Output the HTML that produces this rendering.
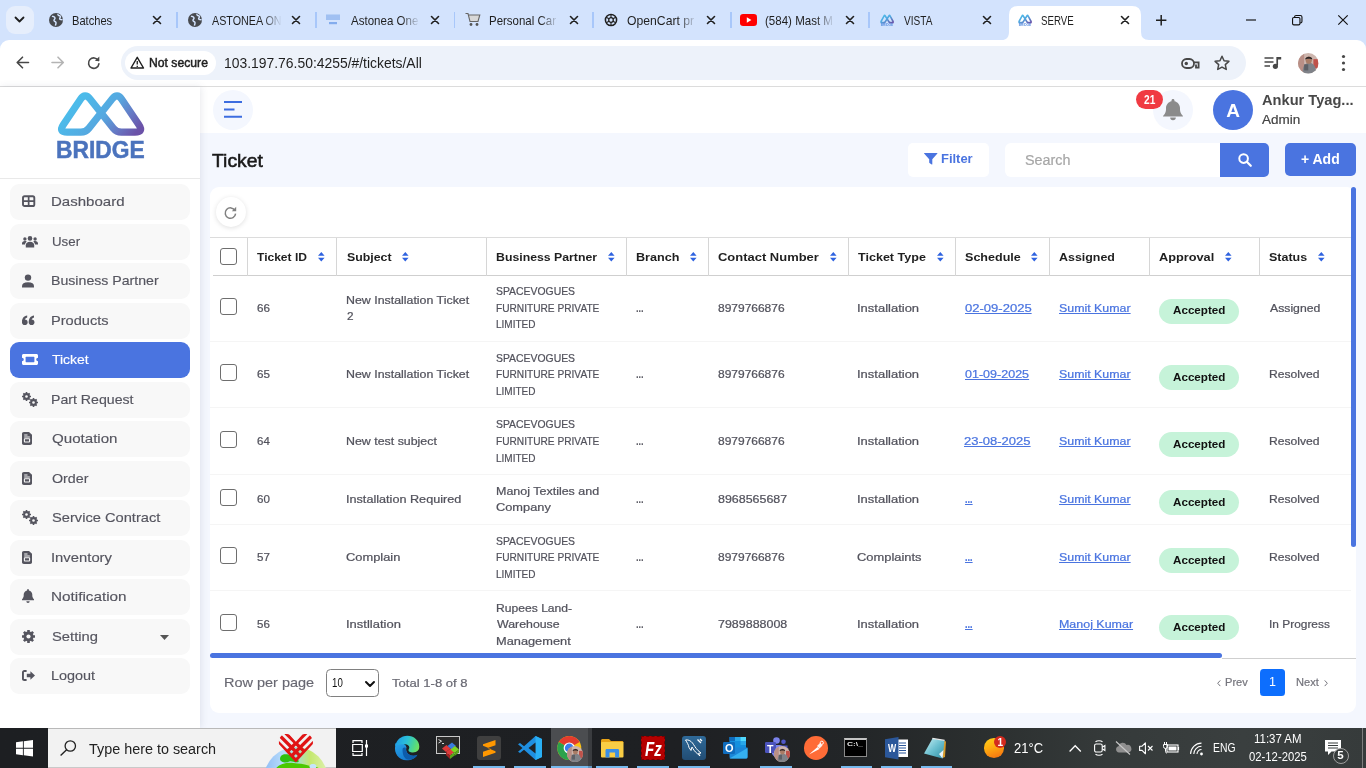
<!DOCTYPE html>
<html lang="en"><head><meta charset="utf-8"><title>SERVE</title>
<style>
*{margin:0;padding:0;box-sizing:border-box}
html,body{width:1366px;height:768px;overflow:hidden;background:#fff}
body{position:relative;font-family:"Liberation Sans",sans-serif;font-size:13px;color:#555}
.root{position:absolute;left:0;top:0;width:1366px;height:768px;will-change:transform}
.root>div,.root>svg,.root>span{position:absolute}
.t{position:absolute;white-space:nowrap;line-height:1;transform-origin:0 50%;display:block}
svg{display:block;overflow:visible}

</style></head>
<body>
<div class="root">
<div style="left:0px;top:0px;width:1366px;height:52px;background:#d3e3fd;"></div>
<div style="left:0px;top:40px;width:1366px;height:46px;background:#fff;border-radius:9px 9px 0 0"></div>
<div style="left:0px;top:86px;width:1366px;height:1px;background:#dcdcdc;"></div>
<div style="left:6px;top:6px;width:27.5px;height:28px;background:#e6eefc;border-radius:9px"></div>
<svg style="left:14px;top:16px;" width="11" height="8" viewBox="0 0 11 8"><path d="M1.5 1.5 L5.5 5.5 L9.5 1.5" fill="none" stroke="#1f1f1f" stroke-width="1.8" stroke-linecap="round" stroke-linejoin="round"/></svg>
<svg style="left:0;top:0" width="0" height="0"><defs><linearGradient id="lg" x1="0" y1="0" x2="1" y2="1"><stop offset="0" stop-color="#4bbbe9"/><stop offset=".45" stop-color="#52a9e0"/><stop offset="1" stop-color="#6a50a6"/></linearGradient></defs></svg>
<svg style="left:48.5px;top:13px;" width="14" height="14" viewBox="0 0 14 14"><circle cx="7" cy="7" r="7" fill="#474a4f"/><path d="M3 3.2c1.2.6 2.6.3 3 1.6.4 1.2-1.3 1.5-1 2.8.3 1 1.8.8 2 2 .2 1-.6 1.8-.4 3M9 1c-.3 1 .6 1.6 1.6 1.8 1 .2 1 1.4.4 2-.7.7-.3 1.6.8 1.8l1.8.2" fill="none" stroke="#d3e3fd" stroke-width="1.5"/></svg>
<span class="t" style="left:72.21px;top:14.86px;font-size:12.8px;color:#1f1f1f;transform:scaleX(0.8687);">Batches</span>
<svg style="left:152.5px;top:16px;" width="8" height="8" viewBox="0 0 8 8"><path d="M0.5 0.5 L7.5 7.5 M7.5 0.5 L0.5 7.5" stroke="#1f1f1f" stroke-width="1.6" stroke-linecap="round"/></svg>
<div style="left:176px;top:12px;width:1.5px;height:16px;background:#a8c7fa;"></div>
<svg style="left:188px;top:13px;" width="14" height="14" viewBox="0 0 14 14"><circle cx="7" cy="7" r="7" fill="#474a4f"/><path d="M3 3.2c1.2.6 2.6.3 3 1.6.4 1.2-1.3 1.5-1 2.8.3 1 1.8.8 2 2 .2 1-.6 1.8-.4 3M9 1c-.3 1 .6 1.6 1.6 1.8 1 .2 1 1.4.4 2-.7.7-.3 1.6.8 1.8l1.8.2" fill="none" stroke="#d3e3fd" stroke-width="1.5"/></svg>
<span class="t" style="left:211.60px;top:14.86px;font-size:12.8px;color:#1f1f1f;transform:scaleX(0.8391);">ASTONEA ON</span>
<svg style="left:292px;top:16px;" width="8" height="8" viewBox="0 0 8 8"><path d="M0.5 0.5 L7.5 7.5 M7.5 0.5 L0.5 7.5" stroke="#1f1f1f" stroke-width="1.6" stroke-linecap="round"/></svg>
<div style="left:315px;top:12px;width:1.5px;height:16px;background:#a8c7fa;"></div>
<svg style="left:325px;top:13px;" width="16" height="14" viewBox="0 0 16 14"><rect x="1" y="1.500" width="14" height="5.500" fill="#8fb4ee" opacity=".75"/><rect x="4" y="9" width="8" height="2.200" fill="#6f9ee8" opacity=".8"/></svg>
<span class="t" style="left:350.60px;top:14.86px;font-size:12.8px;color:#1f1f1f;transform:scaleX(0.9017);">Astonea One</span>
<svg style="left:431px;top:16px;" width="8" height="8" viewBox="0 0 8 8"><path d="M0.5 0.5 L7.5 7.5 M7.5 0.5 L0.5 7.5" stroke="#1f1f1f" stroke-width="1.6" stroke-linecap="round"/></svg>
<div style="left:453.5px;top:12px;width:1.5px;height:16px;background:#a8c7fa;"></div>
<svg style="left:465px;top:12px;" width="16" height="15" viewBox="0 0 16 15"><path d="M0.5 1.5h2.5l2 8h8l1.8-6.5h-11" fill="#d8d8d8" stroke="#666" stroke-width="1.1"/><circle cx="6" cy="12.5" r="1.4" fill="#555"/><circle cx="12" cy="12.5" r="1.4" fill="#555"/></svg>
<span class="t" style="left:488.68px;top:14.86px;font-size:12.8px;color:#1f1f1f;transform:scaleX(0.8965);">Personal Car</span>
<svg style="left:569.5px;top:16px;" width="8" height="8" viewBox="0 0 8 8"><path d="M0.5 0.5 L7.5 7.5 M7.5 0.5 L0.5 7.5" stroke="#1f1f1f" stroke-width="1.6" stroke-linecap="round"/></svg>
<div style="left:592px;top:12px;width:1.5px;height:16px;background:#a8c7fa;"></div>
<svg style="left:603.5px;top:13px;" width="14" height="14" viewBox="0 0 14 14"><circle cx="7" cy="7" r="5.6" fill="none" stroke="#1f1f1f" stroke-width="1.5"/><circle cx="7" cy="7" r="2.3" fill="none" stroke="#1f1f1f" stroke-width="1.3"/><path d="M7 1.4v3.3M7 9.3v3.3M2.2 4.2l2.8 1.6M9 8.2l2.8 1.6M2.2 9.8l2.8-1.6M9 5.8l2.8-1.6" stroke="#1f1f1f" stroke-width="1.1"/></svg>
<span class="t" style="left:627.05px;top:14.86px;font-size:12.8px;color:#1f1f1f;transform:scaleX(0.9528);">OpenCart pr</span>
<svg style="left:707px;top:16px;" width="8" height="8" viewBox="0 0 8 8"><path d="M0.5 0.5 L7.5 7.5 M7.5 0.5 L0.5 7.5" stroke="#1f1f1f" stroke-width="1.6" stroke-linecap="round"/></svg>
<div style="left:730px;top:12px;width:1.5px;height:16px;background:#a8c7fa;"></div>
<svg style="left:740px;top:14px;" width="17" height="12" viewBox="0 0 17 12"><rect width="17" height="12" rx="3.2" fill="#f00"/><path d="M6.8 3.3v5.4l4.6-2.7z" fill="#fff"/></svg>
<span class="t" style="left:765.41px;top:14.86px;font-size:12.8px;color:#1f1f1f;transform:scaleX(0.9018);">(584) Mast M</span>
<svg style="left:845.5px;top:16px;" width="8" height="8" viewBox="0 0 8 8"><path d="M0.5 0.5 L7.5 7.5 M7.5 0.5 L0.5 7.5" stroke="#1f1f1f" stroke-width="1.6" stroke-linecap="round"/></svg>
<div style="left:868px;top:12px;width:1.5px;height:16px;background:#a8c7fa;"></div>
<svg style="left:880px;top:13px;" width="14" height="14" viewBox="0 0 14 14"><g transform="translate(-8.6,-16.200) scale(.155,.195)"><path d="M67.30 132.20 Q58.30 132.20 63.33 124.74 L80.53 99.23 Q85.00 92.60 89.97 98.87 L113.29 128.28 Q116.40 132.20 121.40 132.20 L134.90 132.20 Q143.90 132.20 138.87 124.74 L121.67 99.23 Q117.20 92.60 112.23 98.87 L88.91 128.28 Q85.80 132.20 80.80 132.20 Z" fill="none" stroke="url(#lg)" stroke-width="9.5" stroke-linejoin="round"/></g><text x="7" y="13.200" font-size="3.400" font-weight="700" text-anchor="middle" fill="#5a8fe0" font-family="Liberation Sans, sans-serif" textLength="12.500" lengthAdjust="spacingAndGlyphs">BRIDGE</text></svg>
<span class="t" style="left:904.10px;top:14.86px;font-size:12.8px;color:#1f1f1f;transform:scaleX(0.7872);">VISTA</span>
<svg style="left:983px;top:16px;" width="8" height="8" viewBox="0 0 8 8"><path d="M0.5 0.5 L7.5 7.5 M7.5 0.5 L0.5 7.5" stroke="#1f1f1f" stroke-width="1.6" stroke-linecap="round"/></svg>
<div style="left:263px;top:10px;width:19px;height:20px;background:linear-gradient(90deg,rgba(211,227,253,0),#d3e3fd);"></div>
<div style="left:401px;top:10px;width:19px;height:20px;background:linear-gradient(90deg,rgba(211,227,253,0),#d3e3fd);"></div>
<div style="left:540px;top:10px;width:19px;height:20px;background:linear-gradient(90deg,rgba(211,227,253,0),#d3e3fd);"></div>
<div style="left:678px;top:10px;width:19px;height:20px;background:linear-gradient(90deg,rgba(211,227,253,0),#d3e3fd);"></div>
<div style="left:816px;top:10px;width:19px;height:20px;background:linear-gradient(90deg,rgba(211,227,253,0),#d3e3fd);"></div>
<svg style="left:1001px;top:6px" width="148" height="34" viewBox="0 0 148 34"><path d="M0 34 Q8 34 8 26 V9 Q8 0 17 0 H131 Q140 0 140 9 V26 Q140 34 148 34 Z" fill="#fff"/></svg>
<svg style="left:1018px;top:13px;" width="14" height="14" viewBox="0 0 14 14"><g transform="translate(-8.6,-16.200) scale(.155,.195)"><path d="M67.30 132.20 Q58.30 132.20 63.33 124.74 L80.53 99.23 Q85.00 92.60 89.97 98.87 L113.29 128.28 Q116.40 132.20 121.40 132.20 L134.90 132.20 Q143.90 132.20 138.87 124.74 L121.67 99.23 Q117.20 92.60 112.23 98.87 L88.91 128.28 Q85.80 132.20 80.80 132.20 Z" fill="none" stroke="url(#lg)" stroke-width="9.5" stroke-linejoin="round"/></g><text x="7" y="13.200" font-size="3.400" font-weight="700" text-anchor="middle" fill="#5a8fe0" font-family="Liberation Sans, sans-serif" textLength="12.500" lengthAdjust="spacingAndGlyphs">BRIDGE</text></svg>
<span class="t" style="left:1041.16px;top:14.86px;font-size:12.8px;color:#1f1f1f;transform:scaleX(0.7586);">SERVE</span>
<svg style="left:1121px;top:16px;" width="8" height="8" viewBox="0 0 8 8"><path d="M0.5 0.5 L7.5 7.5 M7.5 0.5 L0.5 7.5" stroke="#1f1f1f" stroke-width="1.6" stroke-linecap="round"/></svg>
<svg style="left:1155.5px;top:14.8px;" width="10.4" height="10.4" viewBox="0 0 10.4 10.4"><path d="M5.200 0v10.400M0 5.200h10.400" stroke="#1f1f1f" stroke-width="1.500"/></svg>
<svg style="left:1246px;top:19px;" width="10" height="2" viewBox="0 0 10 2"><path d="M0 1h10" stroke="#111" stroke-width="1.150"/></svg>
<svg style="left:1292px;top:15px;" width="10.5" height="10.5" viewBox="0 0 10.5 10.5"><rect x=".55" y="2.500" width="7.400" height="7.400" rx="1.300" fill="none" stroke="#111" stroke-width="1.100"/><path d="M2.600 2.300V2a1.450 1.450 0 0 1 1.450-1.450h4.400A1.500 1.500 0 0 1 9.950 2.050v4.400A1.450 1.450 0 0 1 8.500 7.900H8.200" fill="none" stroke="#111" stroke-width="1.100"/></svg>
<svg style="left:1338px;top:15px;" width="10" height="10" viewBox="0 0 10 10"><path d="M.300 .300 L9.700 9.700 M9.700 .300 L.300 9.700" stroke="#111" stroke-width="1.150"/></svg>
<svg style="left:15.5px;top:56px;" width="14" height="13" viewBox="0 0 14 13"><path d="M12.5 6.5H1.500M6.500 1.200 L1.200 6.500 L6.500 11.800" fill="none" stroke="#474747" stroke-width="1.600" stroke-linecap="round" stroke-linejoin="round"/></svg>
<svg style="left:51px;top:56px;" width="14" height="13" viewBox="0 0 14 13"><path d="M1 6.500H12M7 1.200 L12.300 6.500 L7 11.800" fill="none" stroke="#b4b4b4" stroke-width="1.600" stroke-linecap="round" stroke-linejoin="round"/></svg>
<svg style="left:86.7px;top:55.7px;" width="14" height="14" viewBox="0 0 14 14"><path d="M11.300 4.600A5.200 5.200 0 1 0 11.900 7.800" fill="none" stroke="#474747" stroke-width="1.600" stroke-linecap="round"/><path d="M12.300 .6v4.400H7.900z" fill="#474747"/></svg>
<div style="left:121px;top:46px;width:1125px;height:34px;background:#edf2fa;border-radius:17px"></div>
<div style="left:124.7px;top:51px;width:91.2px;height:24px;background:#fff;border-radius:12px"></div>
<svg style="left:129.8px;top:56.2px;" width="14.5" height="13" viewBox="0 0 14.5 13"><path d="M7.250 1.300 L13.500 12 H1 Z" fill="none" stroke="#1f1f1f" stroke-width="1.400" stroke-linejoin="round"/><path d="M7.250 5v3.600M7.250 9.800v1.200" stroke="#1f1f1f" stroke-width="1.300"/></svg>
<span class="t" style="left:149.02px;top:56.43px;font-size:13.2px;color:#1f1f1f;transform:scaleX(0.9240);-webkit-text-stroke-width:.5px;">Not secure</span>
<span class="t" style="left:224.06px;top:55.73px;font-size:14.5px;color:#1f1f1f;transform:scaleX(0.9585);">103.197.76.50:4255/#/tickets/All</span>
<svg style="left:1180.5px;top:57.5px;" width="19" height="12" viewBox="0 0 19 12"><rect x="1" y="1" width="12" height="9" rx="4.500" fill="none" stroke="#474747" stroke-width="1.800"/><circle cx="5.300" cy="5.500" r="1.700" fill="#474747"/><path d="M12.500 4.300H17.600V9.600H15V6.500" fill="none" stroke="#474747" stroke-width="1.800"/></svg>
<svg style="left:1214px;top:55px;" width="16" height="16" viewBox="0 0 16 16"><path d="M8 1.3l2.05 4.5 4.85.55-3.6 3.3.98 4.8L8 12.05 3.72 14.45l.98-4.8-3.6-3.3 4.85-.55z" fill="none" stroke="#474747" stroke-width="1.5" stroke-linejoin="round"/></svg>
<svg style="left:1264px;top:56px;" width="18" height="14" viewBox="0 0 18 14"><path d="M0.5 2h9M0.5 6h9M0.5 10h5.5" stroke="#474747" stroke-width="1.7"/><path d="M13.2 1v8.5" stroke="#474747" stroke-width="1.7"/><path d="M13.2 1h4v2.5h-4z" fill="#474747"/><circle cx="11.4" cy="10.3" r="2.6" fill="#474747"/></svg>
<svg style="left:1297.5px;top:52.5px" width="20.5" height="20.5" viewBox="0 0 20 20"><defs><clipPath id="av1"><circle cx="10" cy="10" r="10"/></clipPath></defs><g clip-path="url(#av1)"><rect width="20" height="20" fill="#cdb6ae"/><rect x="0" y="0" width="6" height="20" fill="#b98f86"/><rect x="15" y="6" width="5" height="9" fill="#c0524a"/><ellipse cx="11" cy="17" rx="6.500" ry="7.500" fill="#7f8288"/><ellipse cx="10.500" cy="7" rx="3" ry="3.600" fill="#a97c66"/><path d="M7 6.500c0-3.500 7-3.800 7 0-.8-1.200-6.200-1.200-7 0z" fill="#2b2424"/><rect x="6" y="11" width="4" height="6" fill="#5e6066"/></g></svg>
<svg style="left:1341px;top:54px;" width="5" height="18" viewBox="0 0 5 18"><circle cx="2.5" cy="2.5" r="1.6" fill="#474747"/><circle cx="2.5" cy="9" r="1.6" fill="#474747"/><circle cx="2.5" cy="15.5" r="1.6" fill="#474747"/></svg>
<div style="left:200px;top:87px;width:1166px;height:641px;background:#f4f7fe;"></div>
<div style="left:200px;top:87px;width:1166px;height:46px;background:#fff;"></div>
<div style="left:0px;top:87px;width:200px;height:641px;background:#fff;box-shadow:1px 0 7px rgba(70,80,110,.13)"></div>
<div style="left:0px;top:178px;width:200px;height:1px;background:#e9e9e9;"></div>
<svg style="left:0;top:0" width="200" height="180" viewBox="0 0 200 180"><defs><linearGradient id="lg2" gradientUnits="userSpaceOnUse" x1="80" y1="100" x2="128" y2="142"><stop offset="0" stop-color="#4cbbea"/><stop offset=".45" stop-color="#55a8e0"/><stop offset=".75" stop-color="#6678c4"/><stop offset="1" stop-color="#6b52a8"/></linearGradient></defs><path d="M67.30 132.20 Q58.30 132.20 63.33 124.74 L80.53 99.23 Q85.00 92.60 89.97 98.87 L113.29 128.28 Q116.40 132.20 121.40 132.20 L134.90 132.20 Q143.90 132.20 138.87 124.74 L121.67 99.23 Q117.20 92.60 112.23 98.87 L88.91 128.28 Q85.80 132.20 80.80 132.20 Z" fill="none" stroke="url(#lg2)" stroke-width="7.2" stroke-linejoin="round"/></svg>
<span class="t" style="left:55.72px;top:139.06px;font-size:23.2px;color:#4b73bd;font-weight:700;transform:scaleX(0.9822);-webkit-text-stroke:.5px #4b73bd;">BRIDGE</span>
<div style="left:10px;top:184px;width:180px;height:35.5px;background:#f8f8f8;border-radius:9px"></div>
<svg style="left:22px;top:194px;" width="14" height="14" viewBox="0 0 14 14"><rect x="1" y="2.200" width="11.300" height="9.800" rx="1.600" fill="none" stroke="#55555f" stroke-width="1.900"/><path d="M6.650 2.200v9.800M1 7.100h11.300" stroke="#55555f" stroke-width="1.700"/></svg>
<span class="t" style="left:51.40px;top:195.56px;font-size:12.8px;color:#55555f;transform:scaleX(1.1741);-webkit-text-stroke-width:.15px;">Dashboard</span>
<div style="left:10px;top:224px;width:180px;height:35.5px;background:#f8f8f8;border-radius:9px"></div>
<svg style="left:22px;top:234.5px;" width="16" height="13" viewBox="0 0 16 13"><circle cx="8" cy="3.4" r="2.3" fill="#55555f"/><circle cx="2.9" cy="4" r="1.7" fill="#55555f"/><circle cx="13.1" cy="4" r="1.7" fill="#55555f"/><path d="M3.8 12.5v-2.3c0-2 1.6-3.4 4.2-3.4s4.2 1.4 4.2 3.4v2.3z" fill="#55555f"/><path d="M0 9.6V8.4c0-1.3 1.1-2.3 2.9-2.3.7 0 1.3.1 1.8.4-1 .8-1.6 1.9-1.7 3.100zM16 9.600V8.400c0-1.300-1.100-2.300-2.900-2.300-.7 0-1.300.1-1.800.4 1 .8 1.600 1.900 1.700 3.100z" fill="#55555f"/></svg>
<span class="t" style="left:51.60px;top:235.56px;font-size:12.8px;color:#55555f;transform:scaleX(1.0387);-webkit-text-stroke-width:.15px;">User</span>
<div style="left:10px;top:263px;width:180px;height:35.5px;background:#f8f8f8;border-radius:9px"></div>
<svg style="left:22px;top:273.5px;" width="12" height="14" viewBox="0 0 12 14"><circle cx="6" cy="3.6" r="3.2" fill="#55555f"/><path d="M0 13.500v-1.300C0 9.700 2 8.200 6 8.200s6 1.500 6 4v1.300z" fill="#55555f"/></svg>
<span class="t" style="left:51.47px;top:274.56px;font-size:12.8px;color:#55555f;transform:scaleX(1.1051);-webkit-text-stroke-width:.15px;">Business Partner</span>
<div style="left:10px;top:303px;width:180px;height:35.5px;background:#f8f8f8;border-radius:9px"></div>
<svg style="left:22px;top:314px;" width="12" height="12" viewBox="0 0 12 12"><g fill="#55555f"><circle cx="2.800" cy="8.200" r="2.800"/><path d="M0 8.200C0 4.300 1.800 1.900 5.200 1.500v1.900C3.700 3.800 3 4.700 2.900 5.800z"/><circle cx="9.600" cy="8.200" r="2.800"/><path d="M6.800 8.200c0-3.900 1.800-6.300 5.200-6.700v1.900c-1.500.4-2.200 1.300-2.300 2.400z"/></g></svg>
<span class="t" style="left:51.43px;top:314.56px;font-size:12.8px;color:#55555f;transform:scaleX(1.1399);-webkit-text-stroke-width:.15px;">Products</span>
<div style="left:10px;top:342px;width:180px;height:35.5px;background:#4a74e0;border-radius:9px"></div>
<svg style="left:21.5px;top:353px;" width="16" height="13" viewBox="0 0 16 13"><path d="M0 2.500C0 1.700.7 1 1.500 1h13c.8 0 1.500.7 1.500 1.500v2.200a1.800 1.800 0 0 0 0 3.600v2.200c0 .8-.7 1.500-1.500 1.500h-13C.7 12 0 11.300 0 10.500V8.300a1.800 1.800 0 0 0 0-3.600z" fill="#fff"/><rect x="3.600" y="3.800" width="8.800" height="5.400" rx=".6" fill="#4a74e0"/></svg>
<span class="t" style="left:52.32px;top:353.56px;font-size:12.8px;color:#fff;transform:scaleX(1.0908);-webkit-text-stroke-width:.15px;">Ticket</span>
<div style="left:10px;top:382px;width:180px;height:35.5px;background:#f8f8f8;border-radius:9px"></div>
<svg style="left:22px;top:392px;" width="16" height="15" viewBox="0 0 16 15"><g fill="#55555f"><circle cx="4.500" cy="4.500" r="3.400"/><path d="M3.700 0h1.600v9H3.700zM0 3.700h9v1.600H0zM.8 1.900 1.900.8l6.300 6.300-1.100 1.100zM7.100.8l1.100 1.100-6.300 6.300L.8 7.100z"/><circle cx="11.500" cy="10.500" r="3.400"/><path d="M10.700 6h1.600v9h-1.600zM7 9.700h9v1.600H7zM7.800 7.900l1.100-1.100 6.300 6.300-1.100 1.100zM14.100 6.800l1.100 1.100-6.300 6.300-1.100-1.100z"/></g><circle cx="4.500" cy="4.500" r="1.300" fill="#f8f8f8"/><circle cx="11.500" cy="10.500" r="1.300" fill="#f8f8f8"/></svg>
<span class="t" style="left:51.47px;top:393.56px;font-size:12.8px;color:#55555f;transform:scaleX(1.1053);-webkit-text-stroke-width:.15px;">Part Request</span>
<div style="left:10px;top:421px;width:180px;height:35.5px;background:#f8f8f8;border-radius:9px"></div>
<svg style="left:22px;top:432px;" width="10" height="13" viewBox="0 0 10 14" preserveAspectRatio="none"><path d="M0 1.800C0 .8.800 0 1.800 0H7l3 3v9.200c0 1-.8 1.800-1.800 1.800H1.800C.8 14 0 13.200 0 12.200z" fill="#55555f"/><path d="M2.200 3.200h3.300M2.200 5.400h5.600" stroke="#f8f8f8" stroke-width="1.100"/><rect x="2.400" y="7.300" width="5.200" height="3.400" rx=".5" fill="none" stroke="#f8f8f8" stroke-width="1.100"/></svg>
<span class="t" style="left:51.92px;top:432.56px;font-size:12.8px;color:#55555f;transform:scaleX(1.1801);-webkit-text-stroke-width:.15px;">Quotation</span>
<div style="left:10px;top:461px;width:180px;height:35.5px;background:#f8f8f8;border-radius:9px"></div>
<svg style="left:22px;top:471.7px;" width="10" height="13" viewBox="0 0 10 14" preserveAspectRatio="none"><path d="M0 1.800C0 .8.800 0 1.800 0H7l3 3v9.200c0 1-.8 1.800-1.800 1.800H1.800C.8 14 0 13.200 0 12.200z" fill="#55555f"/><path d="M2.200 3.200h3.300M2.200 5.400h5.600" stroke="#f8f8f8" stroke-width="1.100"/><rect x="2.400" y="7.300" width="5.200" height="3.400" rx=".5" fill="none" stroke="#f8f8f8" stroke-width="1.100"/></svg>
<span class="t" style="left:51.96px;top:472.56px;font-size:12.8px;color:#55555f;transform:scaleX(1.1149);-webkit-text-stroke-width:.15px;">Order</span>
<div style="left:10px;top:500px;width:180px;height:35.5px;background:#f8f8f8;border-radius:9px"></div>
<svg style="left:22px;top:510px;" width="16" height="15" viewBox="0 0 16 15"><g fill="#55555f"><circle cx="4.500" cy="4.500" r="3.400"/><path d="M3.700 0h1.600v9H3.700zM0 3.700h9v1.600H0zM.8 1.900 1.900.8l6.300 6.300-1.100 1.100zM7.100.8l1.100 1.100-6.300 6.300L.8 7.100z"/><circle cx="11.500" cy="10.500" r="3.400"/><path d="M10.700 6h1.600v9h-1.600zM7 9.700h9v1.600H7zM7.800 7.900l1.100-1.100 6.300 6.300-1.100 1.100zM14.100 6.800l1.100 1.100-6.300 6.300-1.100-1.100z"/></g><circle cx="4.500" cy="4.500" r="1.300" fill="#f8f8f8"/><circle cx="11.500" cy="10.500" r="1.300" fill="#f8f8f8"/></svg>
<span class="t" style="left:51.94px;top:511.56px;font-size:12.8px;color:#55555f;transform:scaleX(1.1452);-webkit-text-stroke-width:.15px;">Service Contract</span>
<div style="left:10px;top:540px;width:180px;height:35.5px;background:#f8f8f8;border-radius:9px"></div>
<svg style="left:22px;top:550.7px;" width="10" height="13" viewBox="0 0 10 14" preserveAspectRatio="none"><path d="M0 1.800C0 .8.800 0 1.800 0H7l3 3v9.200c0 1-.8 1.800-1.800 1.800H1.800C.8 14 0 13.200 0 12.200z" fill="#55555f"/><path d="M2.200 3.200h3.300M2.200 5.400h5.600" stroke="#f8f8f8" stroke-width="1.100"/><rect x="2.400" y="7.300" width="5.200" height="3.400" rx=".5" fill="none" stroke="#f8f8f8" stroke-width="1.100"/></svg>
<span class="t" style="left:51.27px;top:551.56px;font-size:12.8px;color:#55555f;transform:scaleX(1.1583);-webkit-text-stroke-width:.15px;">Inventory</span>
<div style="left:10px;top:579px;width:180px;height:35.5px;background:#f8f8f8;border-radius:9px"></div>
<svg style="left:22px;top:588.8px;" width="12" height="14" viewBox="0 0 12 14"><path d="M6 0c.5 0 .9.400.9.900v.5c2 .4 3.400 2.100 3.400 4.200v.9c0 1.300.5 2.500 1.400 3.400l.3.300v1H0v-1l.3-.3c.9-.9 1.400-2.100 1.400-3.400v-.9c0-2.100 1.400-3.800 3.400-4.200V.9C5.100.4 5.500 0 6 0zM4.300 12.200h3.400a1.700 1.700 0 0 1-3.400 0z" fill="#55555f"/></svg>
<span class="t" style="left:51.38px;top:590.56px;font-size:12.8px;color:#55555f;transform:scaleX(1.1933);-webkit-text-stroke-width:.15px;">Notification</span>
<div style="left:10px;top:619px;width:180px;height:35.5px;background:#f8f8f8;border-radius:9px"></div>
<svg style="left:22px;top:629.5px;" width="13" height="13" viewBox="0 0 13 13"><g fill="#55555f"><circle cx="6.500" cy="6.500" r="5"/><path d="M5.200 0h2.600v13H5.200zM0 5.200h13v2.600H0z"/><path d="M5.200 0h2.600v13H5.200zM0 5.200h13v2.600H0z" transform="rotate(45 6.500 6.500)"/></g><circle cx="6.500" cy="6.500" r="2.100" fill="#f8f8f8"/></svg>
<span class="t" style="left:51.94px;top:630.56px;font-size:12.8px;color:#55555f;transform:scaleX(1.1535);-webkit-text-stroke-width:.15px;">Setting</span>
<div style="left:10px;top:658px;width:180px;height:35.5px;background:#f8f8f8;border-radius:9px"></div>
<svg style="left:22px;top:669px;" width="13" height="13" viewBox="0 0 13 13"><path d="M4.600 1H2.300C1 1 0 2 0 3.300v6.400C0 11 1 12 2.300 12h2.300v-1.900H2.300a.4.400 0 0 1-.4-.4V3.300c0-.2.200-.4.400-.4h2.300z" fill="#55555f"/><path d="M8.400 2.200 13 6.500l-4.600 4.300V8.200H4.800V4.800h3.600z" fill="#55555f"/></svg>
<span class="t" style="left:51.45px;top:669.56px;font-size:12.8px;color:#55555f;transform:scaleX(1.1263);-webkit-text-stroke-width:.15px;">Logout</span>
<svg style="left:159.5px;top:635px;" width="9" height="5" viewBox="0 0 9 5"><path d="M0 0h9L4.500 5z" fill="#555"/></svg>
<div style="left:212.5px;top:90px;width:40px;height:40px;background:#f4f7fe;border-radius:50%"></div>
<svg style="left:223.7px;top:100.5px;" width="19" height="17" viewBox="0 0 19 17"><path d="M0 1h18M0 8.500h10.500M0 15.800h18" stroke="#3d6de0" stroke-width="1.900"/></svg>
<div style="left:1152.5px;top:90px;width:40px;height:40px;background:#f4f7fe;border-radius:50%"></div>
<svg style="left:1163px;top:99px;" width="20" height="21" viewBox="0 0 20 21"><path d="M10 0c.9 0 1.500.700 1.500 1.500v.700c3.200.700 5.500 3.500 5.500 6.800v1.600c0 2.100.800 4.100 2.300 5.600l.5.500c.3.300.2.800-.2.800H.4c-.4 0-.5-.5-.2-.8l.5-.5C2.200 14.700 3 12.700 3 10.600V9c0-3.300 2.300-6.100 5.500-6.800v-.700C8.500.7 9.100 0 10 0zM7.200 18.500h5.600a2.800 2.800 0 0 1-5.600 0z" fill="#8b8b8b"/></svg>
<div style="left:1135.7px;top:90px;width:27.6px;height:19.3px;background:#f03a42;border-radius:9.700px"></div>
<span class="t" style="left:1143.70px;top:93.62px;font-size:12.5px;color:#fff;font-weight:700;transform:scaleX(0.8105);">21</span>
<div style="left:1212.5px;top:90px;width:40px;height:40px;background:#4a74e0;border-radius:50%"></div>
<span class="t" style="left:1226.22px;top:101.12px;font-size:19px;color:#fff;font-weight:700;">A</span>
<span class="t" style="left:1261.51px;top:93.92px;font-size:13.8px;color:#484848;font-weight:700;transform:scaleX(1.0601);">Ankur Tyag...</span>
<span class="t" style="left:1262.10px;top:114.39px;font-size:12.3px;color:#444;transform:scaleX(1.0964);-webkit-text-stroke-width:.2px;">Admin</span>
<span class="t" style="left:212.01px;top:151.79px;font-size:18.2px;color:#1a1a1a;transform:scaleX(1.0622);-webkit-text-stroke:.55px #1a1a1a;">Ticket</span>
<div style="left:908px;top:143px;width:81px;height:34px;background:#fff;border-radius:5px"></div>
<svg style="left:924px;top:153px;" width="13.5" height="12" viewBox="0 0 13.5 12"><path d="M.3 0h12.900c.3 0 .4.300.2.500L8.300 6.300v4.900c0 .3-.3.500-.6.300L5.500 10a.7.700 0 0 1-.3-.6V6.300L.1.500C-.1.300 0 0 .3 0z" fill="#4a74e0"/></svg>
<span class="t" style="left:940.76px;top:153.08px;font-size:12.9px;color:#4a74e0;font-weight:700;transform:scaleX(1.0044);">Filter</span>
<div style="left:1005px;top:143px;width:216px;height:34px;background:#fff;border-radius:6px 0 0 6px"></div>
<span class="t" style="left:1024.95px;top:152.65px;font-size:14px;color:#a6a6a6;transform:scaleX(1.0240);-webkit-text-stroke-width:.2px;">Search</span>
<div style="left:1219.5px;top:143px;width:49px;height:34px;background:#4a74e0;border-radius:0 5px 5px 0"></div>
<svg style="left:1237.5px;top:152.5px;" width="14" height="14" viewBox="0 0 14 14"><circle cx="5.600" cy="5.600" r="4.300" fill="none" stroke="#fff" stroke-width="2"/><path d="M8.800 8.800l4 4" stroke="#fff" stroke-width="2.200" stroke-linecap="round"/></svg>
<div style="left:1284.5px;top:143px;width:71px;height:33.4px;background:#4a74e0;border-radius:5px"></div>
<span class="t" style="left:1301.04px;top:152.23px;font-size:14.5px;color:#fff;font-weight:700;transform:scaleX(0.9630);">+ Add</span>
<div style="left:210px;top:187px;width:1146px;height:525.5px;background:#fff;border-radius:9px"></div>
<div style="left:215.5px;top:197px;width:30px;height:30px;background:#fff;border-radius:50%;box-shadow:0 1px 5px rgba(0,0,0,.13)"></div>
<svg style="left:224.3px;top:205.5px;" width="13" height="13" viewBox="0 0 13 13"><path d="M11 4.600A5.200 5.200 0 1 0 11.600 7.600" fill="none" stroke="#808080" stroke-width="1.500"/><path d="M12.200 .8v4.400H7.800z" fill="#808080"/></svg>
<div style="left:210px;top:236.8px;width:1140.5px;height:1px;background:#dcdcdc;"></div>
<div style="left:213px;top:275px;width:1137.5px;height:1.2px;background:#cfcfcf;"></div>
<div style="left:247px;top:238px;width:1px;height:37.5px;background:#d6d6d6;"></div>
<div style="left:336px;top:238px;width:1px;height:37.5px;background:#d6d6d6;"></div>
<div style="left:486px;top:238px;width:1px;height:37.5px;background:#d6d6d6;"></div>
<div style="left:626px;top:238px;width:1px;height:37.5px;background:#d6d6d6;"></div>
<div style="left:708px;top:238px;width:1px;height:37.5px;background:#d6d6d6;"></div>
<div style="left:847.7px;top:238px;width:1px;height:37.5px;background:#d6d6d6;"></div>
<div style="left:955px;top:238px;width:1px;height:37.5px;background:#d6d6d6;"></div>
<div style="left:1049px;top:238px;width:1px;height:37.5px;background:#d6d6d6;"></div>
<div style="left:1148.7px;top:238px;width:1px;height:37.5px;background:#d6d6d6;"></div>
<div style="left:1258.7px;top:238px;width:1px;height:37.5px;background:#d6d6d6;"></div>
<div style="left:220px;top:248px;width:16.5px;height:16.5px;background:#fff;border:1.2px solid #6e6e6e;border-radius:3px"></div>
<span class="t" style="left:257.48px;top:252.01px;font-size:11.8px;color:#1f1f1f;font-weight:700;transform:scaleX(1.0204);">Ticket ID</span>
<svg style="left:318.1px;top:252.3px;" width="6.6" height="9.4" viewBox="0 0 6.6 9.4"><path d="M3.300 0 6.600 3.700H0zM3.300 9.400 0 5.700h6.600z" fill="#2f63e0"/></svg>
<span class="t" style="left:346.79px;top:252.01px;font-size:11.8px;color:#1f1f1f;font-weight:700;transform:scaleX(1.0455);">Subject</span>
<svg style="left:402.35px;top:252.3px;" width="6.6" height="9.4" viewBox="0 0 6.6 9.4"><path d="M3.300 0 6.600 3.700H0zM3.300 9.400 0 5.700h6.600z" fill="#2f63e0"/></svg>
<span class="t" style="left:496.05px;top:252.01px;font-size:11.8px;color:#1f1f1f;font-weight:700;transform:scaleX(1.0418);">Business Partner</span>
<svg style="left:608.1px;top:252.3px;" width="6.6" height="9.4" viewBox="0 0 6.6 9.4"><path d="M3.300 0 6.600 3.700H0zM3.300 9.400 0 5.700h6.600z" fill="#2f63e0"/></svg>
<span class="t" style="left:636.03px;top:252.01px;font-size:11.8px;color:#1f1f1f;font-weight:700;transform:scaleX(1.0697);">Branch</span>
<svg style="left:689.85px;top:252.3px;" width="6.6" height="9.4" viewBox="0 0 6.6 9.4"><path d="M3.300 0 6.600 3.700H0zM3.300 9.400 0 5.700h6.600z" fill="#2f63e0"/></svg>
<span class="t" style="left:717.83px;top:252.01px;font-size:11.8px;color:#1f1f1f;font-weight:700;transform:scaleX(1.0988);">Contact Number</span>
<svg style="left:829.6px;top:252.3px;" width="6.6" height="9.4" viewBox="0 0 6.6 9.4"><path d="M3.300 0 6.600 3.700H0zM3.300 9.400 0 5.700h6.600z" fill="#2f63e0"/></svg>
<span class="t" style="left:857.97px;top:252.01px;font-size:11.8px;color:#1f1f1f;font-weight:700;transform:scaleX(1.0640);">Ticket Type</span>
<svg style="left:936.6px;top:252.3px;" width="6.6" height="9.4" viewBox="0 0 6.6 9.4"><path d="M3.300 0 6.600 3.700H0zM3.300 9.400 0 5.700h6.600z" fill="#2f63e0"/></svg>
<span class="t" style="left:964.79px;top:252.01px;font-size:11.8px;color:#1f1f1f;font-weight:700;transform:scaleX(1.0647);">Schedule</span>
<svg style="left:1031.35px;top:252.3px;" width="6.6" height="9.4" viewBox="0 0 6.6 9.4"><path d="M3.300 0 6.600 3.700H0zM3.300 9.400 0 5.700h6.600z" fill="#2f63e0"/></svg>
<span class="t" style="left:1059.35px;top:252.01px;font-size:11.8px;color:#1f1f1f;font-weight:700;transform:scaleX(1.0538);">Assigned</span>
<span class="t" style="left:1159.34px;top:252.01px;font-size:11.8px;color:#1f1f1f;font-weight:700;transform:scaleX(1.0807);">Approval</span>
<svg style="left:1224.85px;top:252.3px;" width="6.6" height="9.4" viewBox="0 0 6.6 9.4"><path d="M3.300 0 6.600 3.700H0zM3.300 9.400 0 5.700h6.600z" fill="#2f63e0"/></svg>
<span class="t" style="left:1269.29px;top:252.01px;font-size:11.8px;color:#1f1f1f;font-weight:700;transform:scaleX(1.0583);">Status</span>
<svg style="left:1318.1px;top:252.3px;" width="6.6" height="9.4" viewBox="0 0 6.6 9.4"><path d="M3.300 0 6.600 3.700H0zM3.300 9.400 0 5.700h6.600z" fill="#2f63e0"/></svg>
<div style="left:210px;top:341px;width:1140.5px;height:1px;background:#f5f5f5;"></div>
<div style="left:210px;top:407px;width:1140.5px;height:1px;background:#f5f5f5;"></div>
<div style="left:210px;top:474px;width:1140.5px;height:1px;background:#f5f5f5;"></div>
<div style="left:210px;top:524px;width:1140.5px;height:1px;background:#f5f5f5;"></div>
<div style="left:210px;top:590px;width:1140.5px;height:1px;background:#f5f5f5;"></div>
<div style="left:220px;top:298px;width:16.5px;height:16.5px;background:#fff;border:1.2px solid #6e6e6e;border-radius:3px"></div>
<span class="t" style="left:257.02px;top:302.86px;font-size:10.8px;color:#52525c;transform:scaleX(1.0790);-webkit-text-stroke-width:.22px;">66</span>
<span class="t" style="left:346.11px;top:294.56px;font-size:10.8px;color:#52525c;transform:scaleX(1.1466);-webkit-text-stroke-width:.22px;">New Installation Ticket</span>
<span class="t" style="left:346.51px;top:311.16px;font-size:10.8px;color:#52525c;transform:scaleX(1.0870);-webkit-text-stroke-width:.22px;">2</span>
<span class="t" style="left:496.38px;top:286.26px;font-size:10.8px;color:#52525c;transform:scaleX(0.9638);-webkit-text-stroke-width:.22px;">SPACEVOGUES</span>
<span class="t" style="left:496.04px;top:302.86px;font-size:10.8px;color:#52525c;transform:scaleX(0.9399);-webkit-text-stroke-width:.22px;">FURNITURE PRIVATE</span>
<span class="t" style="left:496.05px;top:319.46px;font-size:10.8px;color:#52525c;transform:scaleX(0.9253);-webkit-text-stroke-width:.22px;">LIMITED</span>
<span class="t" style="left:635.51px;top:302.86px;font-size:10.8px;color:#52525c;font-weight:700;transform:scaleX(0.8458);">...</span>
<span class="t" style="left:717.87px;top:302.86px;font-size:10.8px;color:#52525c;transform:scaleX(1.1092);-webkit-text-stroke-width:.22px;">8979766876</span>
<span class="t" style="left:856.93px;top:302.86px;font-size:10.8px;color:#52525c;transform:scaleX(1.2030);-webkit-text-stroke-width:.22px;">Installation</span>
<span class="t" style="left:964.64px;top:302.86px;font-size:10.8px;color:#4a74e0;transform:scaleX(1.2063);text-decoration:underline;-webkit-text-stroke-width:.22px;">02-09-2025</span>
<span class="t" style="left:1059.04px;top:302.86px;font-size:10.8px;color:#4a74e0;transform:scaleX(1.1474);text-decoration:underline;-webkit-text-stroke-width:.22px;">Sumit Kumar</span>
<div style="left:1159px;top:299px;width:79.75px;height:24.5px;background:#c6f3d9;border-radius:12.500px"></div>
<span class="t" style="left:1172.87px;top:305.41px;font-size:11.8px;color:#111;font-weight:700;transform:scaleX(0.9865);">Accepted</span>
<span class="t" style="left:1269.60px;top:302.86px;font-size:10.8px;color:#52525c;transform:scaleX(1.1332);-webkit-text-stroke-width:.22px;">Assigned</span>
<div style="left:220px;top:364.4px;width:16.5px;height:16.5px;background:#fff;border:1.2px solid #6e6e6e;border-radius:3px"></div>
<span class="t" style="left:257.02px;top:369.26px;font-size:10.8px;color:#52525c;transform:scaleX(1.0790);-webkit-text-stroke-width:.22px;">65</span>
<span class="t" style="left:346.11px;top:369.26px;font-size:10.8px;color:#52525c;transform:scaleX(1.1466);-webkit-text-stroke-width:.22px;">New Installation Ticket</span>
<span class="t" style="left:496.38px;top:352.66px;font-size:10.8px;color:#52525c;transform:scaleX(0.9638);-webkit-text-stroke-width:.22px;">SPACEVOGUES</span>
<span class="t" style="left:496.04px;top:369.26px;font-size:10.8px;color:#52525c;transform:scaleX(0.9399);-webkit-text-stroke-width:.22px;">FURNITURE PRIVATE</span>
<span class="t" style="left:496.05px;top:385.86px;font-size:10.8px;color:#52525c;transform:scaleX(0.9253);-webkit-text-stroke-width:.22px;">LIMITED</span>
<span class="t" style="left:635.51px;top:369.26px;font-size:10.8px;color:#52525c;font-weight:700;transform:scaleX(0.8458);">...</span>
<span class="t" style="left:717.87px;top:369.26px;font-size:10.8px;color:#52525c;transform:scaleX(1.1092);-webkit-text-stroke-width:.22px;">8979766876</span>
<span class="t" style="left:856.93px;top:369.26px;font-size:10.8px;color:#52525c;transform:scaleX(1.2030);-webkit-text-stroke-width:.22px;">Installation</span>
<span class="t" style="left:964.66px;top:369.26px;font-size:10.8px;color:#4a74e0;transform:scaleX(1.1604);text-decoration:underline;-webkit-text-stroke-width:.22px;">01-09-2025</span>
<span class="t" style="left:1059.04px;top:369.26px;font-size:10.8px;color:#4a74e0;transform:scaleX(1.1474);text-decoration:underline;-webkit-text-stroke-width:.22px;">Sumit Kumar</span>
<div style="left:1159px;top:365.4px;width:79.75px;height:24.5px;background:#c6f3d9;border-radius:12.500px"></div>
<span class="t" style="left:1172.87px;top:371.81px;font-size:11.8px;color:#111;font-weight:700;transform:scaleX(0.9865);">Accepted</span>
<span class="t" style="left:1268.63px;top:369.26px;font-size:10.8px;color:#52525c;transform:scaleX(1.1241);-webkit-text-stroke-width:.22px;">Resolved</span>
<div style="left:220px;top:431.2px;width:16.5px;height:16.5px;background:#fff;border:1.2px solid #6e6e6e;border-radius:3px"></div>
<span class="t" style="left:257.03px;top:436.06px;font-size:10.8px;color:#52525c;transform:scaleX(1.0634);-webkit-text-stroke-width:.22px;">64</span>
<span class="t" style="left:346.11px;top:436.06px;font-size:10.8px;color:#52525c;transform:scaleX(1.1476);-webkit-text-stroke-width:.22px;">New test subject</span>
<span class="t" style="left:496.38px;top:419.46px;font-size:10.8px;color:#52525c;transform:scaleX(0.9638);-webkit-text-stroke-width:.22px;">SPACEVOGUES</span>
<span class="t" style="left:496.04px;top:436.06px;font-size:10.8px;color:#52525c;transform:scaleX(0.9399);-webkit-text-stroke-width:.22px;">FURNITURE PRIVATE</span>
<span class="t" style="left:496.05px;top:452.66px;font-size:10.8px;color:#52525c;transform:scaleX(0.9253);-webkit-text-stroke-width:.22px;">LIMITED</span>
<span class="t" style="left:635.51px;top:436.06px;font-size:10.8px;color:#52525c;font-weight:700;transform:scaleX(0.8458);">...</span>
<span class="t" style="left:717.87px;top:436.06px;font-size:10.8px;color:#52525c;transform:scaleX(1.1092);-webkit-text-stroke-width:.22px;">8979766876</span>
<span class="t" style="left:856.93px;top:436.06px;font-size:10.8px;color:#52525c;transform:scaleX(1.2030);-webkit-text-stroke-width:.22px;">Installation</span>
<span class="t" style="left:964.45px;top:436.06px;font-size:10.8px;color:#4a74e0;transform:scaleX(1.2053);text-decoration:underline;-webkit-text-stroke-width:.22px;">23-08-2025</span>
<span class="t" style="left:1059.04px;top:436.06px;font-size:10.8px;color:#4a74e0;transform:scaleX(1.1474);text-decoration:underline;-webkit-text-stroke-width:.22px;">Sumit Kumar</span>
<div style="left:1159px;top:432.2px;width:79.75px;height:24.5px;background:#c6f3d9;border-radius:12.500px"></div>
<span class="t" style="left:1172.87px;top:438.61px;font-size:11.8px;color:#111;font-weight:700;transform:scaleX(0.9865);">Accepted</span>
<span class="t" style="left:1268.63px;top:436.06px;font-size:10.8px;color:#52525c;transform:scaleX(1.1241);-webkit-text-stroke-width:.22px;">Resolved</span>
<div style="left:220px;top:489.2px;width:16.5px;height:16.5px;background:#fff;border:1.2px solid #6e6e6e;border-radius:3px"></div>
<span class="t" style="left:257.02px;top:494.06px;font-size:10.8px;color:#52525c;transform:scaleX(1.0738);-webkit-text-stroke-width:.22px;">60</span>
<span class="t" style="left:345.96px;top:494.06px;font-size:10.8px;color:#52525c;transform:scaleX(1.1711);-webkit-text-stroke-width:.22px;">Installation Required</span>
<span class="t" style="left:495.85px;top:485.76px;font-size:10.8px;color:#52525c;transform:scaleX(1.1561);-webkit-text-stroke-width:.22px;">Manoj Textiles and</span>
<span class="t" style="left:496.21px;top:502.36px;font-size:10.8px;color:#52525c;transform:scaleX(1.1854);-webkit-text-stroke-width:.22px;">Company</span>
<span class="t" style="left:635.51px;top:494.06px;font-size:10.8px;color:#52525c;font-weight:700;transform:scaleX(0.8458);">...</span>
<span class="t" style="left:717.85px;top:494.06px;font-size:10.8px;color:#52525c;transform:scaleX(1.1525);-webkit-text-stroke-width:.22px;">8968565687</span>
<span class="t" style="left:856.93px;top:494.06px;font-size:10.8px;color:#52525c;transform:scaleX(1.2030);-webkit-text-stroke-width:.22px;">Installation</span>
<span class="t" style="left:964.51px;top:494.06px;font-size:10.8px;color:#4a74e0;font-weight:700;transform:scaleX(0.8458);text-decoration:underline;-webkit-text-stroke-width:.22px;">...</span>
<span class="t" style="left:1059.04px;top:494.06px;font-size:10.8px;color:#4a74e0;transform:scaleX(1.1474);text-decoration:underline;-webkit-text-stroke-width:.22px;">Sumit Kumar</span>
<div style="left:1159px;top:490.2px;width:79.75px;height:24.5px;background:#c6f3d9;border-radius:12.500px"></div>
<span class="t" style="left:1172.87px;top:496.61px;font-size:11.8px;color:#111;font-weight:700;transform:scaleX(0.9865);">Accepted</span>
<span class="t" style="left:1268.63px;top:494.06px;font-size:10.8px;color:#52525c;transform:scaleX(1.1241);-webkit-text-stroke-width:.22px;">Resolved</span>
<div style="left:220px;top:547.4px;width:16.5px;height:16.5px;background:#fff;border:1.2px solid #6e6e6e;border-radius:3px"></div>
<span class="t" style="left:257.14px;top:552.26px;font-size:10.8px;color:#52525c;transform:scaleX(1.0738);-webkit-text-stroke-width:.22px;">57</span>
<span class="t" style="left:346.46px;top:552.26px;font-size:10.8px;color:#52525c;transform:scaleX(1.1909);-webkit-text-stroke-width:.22px;">Complain</span>
<span class="t" style="left:496.38px;top:535.66px;font-size:10.8px;color:#52525c;transform:scaleX(0.9638);-webkit-text-stroke-width:.22px;">SPACEVOGUES</span>
<span class="t" style="left:496.04px;top:552.26px;font-size:10.8px;color:#52525c;transform:scaleX(0.9399);-webkit-text-stroke-width:.22px;">FURNITURE PRIVATE</span>
<span class="t" style="left:496.05px;top:568.86px;font-size:10.8px;color:#52525c;transform:scaleX(0.9253);-webkit-text-stroke-width:.22px;">LIMITED</span>
<span class="t" style="left:635.51px;top:552.26px;font-size:10.8px;color:#52525c;font-weight:700;transform:scaleX(0.8458);">...</span>
<span class="t" style="left:717.87px;top:552.26px;font-size:10.8px;color:#52525c;transform:scaleX(1.1092);-webkit-text-stroke-width:.22px;">8979766876</span>
<span class="t" style="left:857.46px;top:552.26px;font-size:10.8px;color:#52525c;transform:scaleX(1.1939);-webkit-text-stroke-width:.22px;">Complaints</span>
<span class="t" style="left:964.51px;top:552.26px;font-size:10.8px;color:#4a74e0;font-weight:700;transform:scaleX(0.8458);text-decoration:underline;-webkit-text-stroke-width:.22px;">...</span>
<span class="t" style="left:1059.04px;top:552.26px;font-size:10.8px;color:#4a74e0;transform:scaleX(1.1474);text-decoration:underline;-webkit-text-stroke-width:.22px;">Sumit Kumar</span>
<div style="left:1159px;top:548.4px;width:79.75px;height:24.5px;background:#c6f3d9;border-radius:12.500px"></div>
<span class="t" style="left:1172.87px;top:554.81px;font-size:11.8px;color:#111;font-weight:700;transform:scaleX(0.9865);">Accepted</span>
<span class="t" style="left:1268.63px;top:552.26px;font-size:10.8px;color:#52525c;transform:scaleX(1.1241);-webkit-text-stroke-width:.22px;">Resolved</span>
<div style="left:220px;top:614.3px;width:16.5px;height:16.5px;background:#fff;border:1.2px solid #6e6e6e;border-radius:3px"></div>
<span class="t" style="left:257.14px;top:619.16px;font-size:10.8px;color:#52525c;transform:scaleX(1.0686);-webkit-text-stroke-width:.22px;">56</span>
<span class="t" style="left:345.93px;top:619.16px;font-size:10.8px;color:#52525c;transform:scaleX(1.2025);-webkit-text-stroke-width:.22px;">Instllation</span>
<span class="t" style="left:495.88px;top:602.56px;font-size:10.8px;color:#52525c;transform:scaleX(1.1222);-webkit-text-stroke-width:.22px;">Rupees Land-</span>
<span class="t" style="left:496.85px;top:619.16px;font-size:10.8px;color:#52525c;transform:scaleX(1.1428);-webkit-text-stroke-width:.22px;">Warehouse</span>
<span class="t" style="left:495.83px;top:635.76px;font-size:10.8px;color:#52525c;transform:scaleX(1.1851);-webkit-text-stroke-width:.22px;">Management</span>
<span class="t" style="left:635.51px;top:619.16px;font-size:10.8px;color:#52525c;font-weight:700;transform:scaleX(0.8458);">...</span>
<span class="t" style="left:717.73px;top:619.16px;font-size:10.8px;color:#52525c;transform:scaleX(1.1535);-webkit-text-stroke-width:.22px;">7989888008</span>
<span class="t" style="left:856.93px;top:619.16px;font-size:10.8px;color:#52525c;transform:scaleX(1.2030);-webkit-text-stroke-width:.22px;">Installation</span>
<span class="t" style="left:964.51px;top:619.16px;font-size:10.8px;color:#4a74e0;font-weight:700;transform:scaleX(0.8458);text-decoration:underline;-webkit-text-stroke-width:.22px;">...</span>
<span class="t" style="left:1058.60px;top:619.16px;font-size:10.8px;color:#4a74e0;transform:scaleX(1.1531);text-decoration:underline;-webkit-text-stroke-width:.22px;">Manoj Kumar</span>
<div style="left:1159px;top:615.3px;width:79.75px;height:24.5px;background:#c6f3d9;border-radius:12.500px"></div>
<span class="t" style="left:1172.87px;top:621.71px;font-size:11.8px;color:#111;font-weight:700;transform:scaleX(0.9865);">Accepted</span>
<span class="t" style="left:1268.53px;top:619.16px;font-size:10.8px;color:#52525c;transform:scaleX(1.1026);-webkit-text-stroke-width:.22px;">In Progress</span>
<div style="left:210px;top:653px;width:1012px;height:5px;background:#4a74e0;border-radius:3px"></div>
<div style="left:1222px;top:657.5px;width:133.5px;height:1px;background:#cfcfcf;"></div>
<div style="left:1351px;top:187px;width:5px;height:360px;background:#4a74e0;border-radius:3px"></div>
<span class="t" style="left:223.94px;top:676.00px;font-size:13px;color:#686872;transform:scaleX(1.1139);-webkit-text-stroke-width:.15px;">Row per page</span>
<div style="left:326px;top:669px;width:52.5px;height:27.5px;background:#fff;border:1px solid #808080;border-radius:4.500px"></div>
<span class="t" style="left:332.07px;top:676.66px;font-size:12.8px;color:#111;transform:scaleX(0.7569);">10</span>
<svg style="left:365px;top:680.5px;" width="10" height="6.5" viewBox="0 0 10 6.5"><path d="M1 1l4 4 4-4" fill="none" stroke="#111" stroke-width="2" stroke-linecap="round" stroke-linejoin="round"/></svg>
<span class="t" style="left:391.84px;top:677.77px;font-size:10.9px;color:#686872;transform:scaleX(1.2013);-webkit-text-stroke-width:.2px;">Total 1-8 of 8</span>
<svg style="left:1217px;top:680px;" width="4" height="6.5" viewBox="0 0 4 6.5"><path d="M3.300 .4 .7 3.250l2.600 2.850" fill="none" stroke="#74747c" stroke-width="1"/></svg>
<span class="t" style="left:1224.96px;top:677.43px;font-size:11.3px;color:#74747c;transform:scaleX(0.9807);-webkit-text-stroke-width:.2px;">Prev</span>
<div style="left:1259.75px;top:669px;width:24.75px;height:26.5px;background:#0d6efd;border-radius:3.500px"></div>
<span class="t" style="left:1269.06px;top:675.92px;font-size:12.5px;color:#fff;">1</span>
<span class="t" style="left:1295.71px;top:677.43px;font-size:11.3px;color:#74747c;transform:scaleX(0.9821);-webkit-text-stroke-width:.2px;">Next</span>
<svg style="left:1323.7px;top:680px;" width="4" height="6.5" viewBox="0 0 4 6.5"><path d="M.7 .4 3.300 3.250.7 6.100" fill="none" stroke="#74747c" stroke-width="1"/></svg>
<div style="left:0px;top:728px;width:1366px;height:40px;background:linear-gradient(90deg,#1d1f22 0,#1e2023 50%,#232628 63%,#2b2f2f 72%,#353a3a 81%,#3a3f3f 91%,#363b3b 100%);"></div>
<svg style="left:15.5px;top:740px;" width="17" height="16.5" viewBox="0 0 17 16.5"><path d="M0 2.300 6.900 1.300v6.500H0zM7.800 1.200 17 0v7.800H7.800zM0 8.700h6.900v6.500L0 14.200zM7.800 8.700H17v7.800l-9.200-1.200z" fill="#fff"/></svg>
<div style="left:48px;top:728px;width:288px;height:40px;background:#f2f2f2;border-top:1px solid #b9b9b9;border-bottom:1px solid #c9c9c9"></div>
<svg style="left:60px;top:740px;" width="16.5" height="16" viewBox="0 0 16.5 16"><circle cx="10.300" cy="6" r="5.200" fill="none" stroke="#222" stroke-width="1.300"/><path d="M6.600 9.800.6 15.500" stroke="#222" stroke-width="1.400"/></svg>
<span class="t" style="left:89.31px;top:740.88px;font-size:15.5px;color:#222;transform:scaleX(0.9275);">Type here to search</span>
<svg style="left:255px;top:726px" width="90" height="42" viewBox="0 0 1366 637"><defs><linearGradient id="gl" x1="0" y1="0" x2="1" y2="0"><stop offset="0" stop-color="#8fbcf5"/><stop offset=".3" stop-color="#b7dcfb"/><stop offset=".52" stop-color="#a5e0d0"/><stop offset=".72" stop-color="#c4e86e"/><stop offset="1" stop-color="#dff0b0"/></linearGradient><clipPath id="gc"><rect x="0" y="46" width="1228" height="591"/></clipPath><clipPath id="hc"><path d="M620 552 L362 272 C345 160 440 95 520 130 L620 238 L720 130 C800 95 895 160 878 272 Z"/></clipPath></defs><g clip-path="url(#gc)"><circle cx="620" cy="805" r="485" fill="url(#gl)"/><path d="M380 500c0-50 40-80 110-70 50 10 90 40 130 60 40 20 60 50 30 60-60 10-90-30-130-10-50 30-140 10-140-40z" fill="#2fbf10"/><path d="M320 640c60-70 160-90 260-80 80 10 160 10 230 40 60 20 120 10 160 40H320z" fill="#4cc800"/><path d="M830 600c20-30 80-30 100 0 10 20 0 40-20 40h-60c-20 0-30-20-20-40z" fill="#c5e4fb"/></g><g clip-path="url(#hc)" stroke="#e01414" stroke-width="52" fill="none"><path d="M300 200 660 560M300 70 725 495M380 20 790 430M940 200 580 560M940 70 515 495M860 20 450 430"/></g></svg>
<svg style="left:351.5px;top:739.5px;" width="17" height="16" viewBox="0 0 17 16"><path d="M1 3V.700h9V3M1 13v2.300h9V13M.700 4.500h9.600v7H.700z" fill="none" stroke="#fff" stroke-width="1.200"/><path d="M14.500 0v16" stroke="#fff" stroke-width="1.200"/><rect x="13" y="4.500" width="3" height="3" fill="#fff"/></svg>
<svg style="left:394.900px;top:735.800px" width="24.300" height="24.300" viewBox="0 0 24.300 24.300"><defs><linearGradient id="eg1" x1="0" y1=".3" x2="1" y2=".55"><stop offset="0" stop-color="#1d9be8"/><stop offset=".45" stop-color="#2bc0d8"/><stop offset=".8" stop-color="#4fd88a"/><stop offset="1" stop-color="#6fe060"/></linearGradient><linearGradient id="eg2" x1="0" y1="0" x2=".6" y2="1"><stop offset="0" stop-color="#27a4ea"/><stop offset="1" stop-color="#1577cc"/></linearGradient></defs><path d="M.2 10C-1.200 17 3.500 24.300 11.500 24.300 16.500 24.300 20.800 22.300 22.400 18.800 18.500 20.600 13.500 19.300 12 16.500 11 14.500 11 13 11.500 11.500 11 9 8 6 .2 7.500Z" fill="url(#eg2)"/><path d="M7.700 12.600C7.200 16 8 20.500 11 23 14.500 25 20.500 22.800 22.400 18.800 18.500 20.600 13.500 19.300 12 16.500 11 14.600 10.600 13.200 10.800 12 9.800 11.300 8.300 11.500 7.700 12.600Z" fill="#0d5cab"/><path d="M.2 10C1.500 4 6-.2 12.300-.2 19-.2 24.300 4.600 24.300 10.400 24.300 12.200 23.800 13.600 23 14.600 21.500 16.300 18.500 16.800 16 16.300 14.500 16 13.500 15.200 13.500 14.300 13.500 13.300 14.300 12.800 14.300 11.600 14.300 9.800 12.500 8.300 10 8.300 6.500 8.300 3 8.600 .2 10Z" fill="url(#eg1)"/></svg>
<div style="left:435.5px;top:736px;width:24.5px;height:18px;background:#2a2a2a;border:1.500px solid #c9c9c9"></div>
<svg style="left:438px;top:738.5px;" width="6" height="5" viewBox="0 0 6 5"><path d="M.5.5 3.500 2.200.5 4M4 4.500h2" stroke="#eee" stroke-width=".9" fill="none"/></svg>
<svg style="left:441px;top:742px;" width="18" height="17" viewBox="0 0 18 17"><path d="M1 6.500 5.500 3l4 3.500L5 10z" fill="#e03a3a"/><path d="M6.500 4 11 .5l4 3.500-4.500 3.500z" fill="#3a7be0"/><path d="M5 10l4.500-3.500 4 3.500L9 13.500z" fill="#e03a3a"/><path d="M9.500 7.500 14 4l4 3.500-4.500 3.500z" fill="#7ed321"/><path d="M9 13.500l4.500-3.500 0 3.500L9 17z" fill="#5aa51a"/><path d="M5 10v3l4 4v-3.500z" fill="#a32222"/><path d="M13.500 11 18 7.500v3L13.500 14z" fill="#5aa51a"/></svg>
<div style="left:476.5px;top:736px;width:24.5px;height:24px;background:#3f3f3f;border-radius:3px"></div>
<svg style="left:482.5px;top:739.8px;" width="12.5" height="17" viewBox="0 0 12.5 17"><path d="M0 4.200 12.500 0v5.200L4.500 8l8 3.200v1.600L0 17v-5.200L8 9 0 5.800z" fill="#ff9800"/></svg>
<div style="left:473.0px;top:766px;width:32px;height:2px;background:#76b9ed;"></div>
<svg style="left:518px;top:736px;" width="24" height="24" viewBox="0 0 24 24"><path d="M17.500 0 24 3v18l-6.500 3L6 13.800 2 17l-2-1.200L4.500 12 0 8.200 2 7l4 3.200z" fill="#1f8fe0"/><path d="M17.500 0 24 3v18l-6.500 3z" fill="#29b0f5"/><path d="M17.500 6.500v11L10.500 12z" fill="#1f2225"/></svg>
<div style="left:514.0px;top:766px;width:32px;height:2px;background:#76b9ed;"></div>
<div style="left:551px;top:728px;width:36.5px;height:40px;background:#4b4d50;"></div>
<div style="left:588px;top:728px;width:3.5px;height:40px;background:#3a3c3f;"></div>
<svg style="left:556.500px;top:736px" width="24.500" height="24" viewBox="0 0 24 24"><circle cx="12" cy="12" r="12" fill="#fbc116"/><path d="M12 12 1.600 6A12 12 0 0 1 22.400 6z" fill="#e33b2e"/><path d="M12 12 1.600 6A12 12 0 0 0 12 24l5.500-9z" fill="#2ba24c"/><path d="M12 6h10.400" stroke="#e33b2e" stroke-width="0"/><circle cx="12" cy="12" r="5.600" fill="#fff"/><circle cx="12" cy="12" r="4.400" fill="#3b7ded"/></svg>
<svg style="left:567px;top:746.2px" width="16" height="16" viewBox="0 0 20 20"><defs><clipPath id="av2"><circle cx="10" cy="10" r="10"/></clipPath></defs><g clip-path="url(#av2)"><rect width="20" height="20" fill="#cdb6ae"/><rect x="0" y="0" width="6" height="20" fill="#b98f86"/><rect x="15" y="6" width="5" height="9" fill="#c0524a"/><ellipse cx="11" cy="17" rx="6.500" ry="7.500" fill="#7f8288"/><ellipse cx="10.500" cy="7" rx="3" ry="3.600" fill="#a97c66"/><path d="M7 6.500c0-3.500 7-3.800 7 0-.8-1.200-6.200-1.200-7 0z" fill="#2b2424"/><rect x="6" y="11" width="4" height="6" fill="#5e6066"/></g></svg>
<div style="left:551px;top:766px;width:36.5px;height:2px;background:#76b9ed;"></div>
<div style="left:588px;top:766px;width:3.5px;height:2px;background:#5f94be;"></div>
<svg style="left:600.5px;top:738.5px;" width="22.5" height="18.5" viewBox="0 0 22.5 18.5"><path d="M0 1.500C0 .7.700 0 1.500 0H8l2 2h11c.8 0 1.500.700 1.500 1.500V4H0z" fill="#e8a317"/><rect x="0" y="3" width="22.500" height="15.500" rx="1" fill="#f9cd45"/><path d="M4.500 18.500v-7.200c0-.7.600-1.300 1.300-1.300h11c.7 0 1.300.6 1.300 1.300v7.200h-4v-5h-5.600v5z" fill="#3a8ee6"/></svg>
<div style="left:596.0px;top:766px;width:32px;height:2px;background:#76b9ed;"></div>
<div style="left:640.5px;top:736px;width:24px;height:24px;background:#b50000;outline:1px dashed #7a0000;outline-offset:-1px"></div>
<span class="t" style="left:644.67px;top:738.22px;font-size:21px;color:#fff;font-weight:700;transform:scaleX(0.7159);font-style:italic;">Fz</span>
<div style="left:637.0px;top:766px;width:32px;height:2px;background:#76b9ed;"></div>
<div style="left:682px;top:736px;width:24px;height:24px;background:linear-gradient(180deg,#2f6a99,#224d74);border-radius:3px"></div>
<svg style="left:684px;top:738px;" width="20" height="20" viewBox="0 0 20 20"><path d="M1.500 2c2.500-.5 5 .5 7 3 1.500 2 3 5 5.500 7.500l3 2.500-2.500.3 1.500 2.700-2.800-2.500c-2.700-2-4-4.500-5.200-6.500l-1 3.500L5 9.500C4.500 6.500 3 4.500 1.500 2z" fill="none" stroke="#fff" stroke-width="1"/><path d="M13.500 1.500l3.500 3.500M16 1l2 2" stroke="#fff" stroke-width="1.300"/></svg>
<div style="left:678.0px;top:766px;width:32px;height:2px;background:#76b9ed;"></div>
<svg style="left:722.5px;top:737px;" width="24.5" height="21.5" viewBox="0 0 24.5 21.5"><rect x="6.500" y="0" width="16.500" height="12" fill="#1490df"/><rect x="6.500" y="0" width="5.500" height="4" fill="#0f6cbd"/><rect x="12" y="0" width="5.500" height="4" fill="#28a8ea"/><rect x="17.500" y="0" width="5.500" height="4" fill="#50d9ff"/><rect x="12" y="4" width="5.500" height="4" fill="#1490df"/><rect x="17.500" y="4" width="5.500" height="4" fill="#28a8ea"/><path d="M6.500 10.500 24.500 10.500V20a1.500 1.500 0 0 1-1.500 1.500H8A1.500 1.500 0 0 1 6.500 20z" fill="#1b86d8"/><path d="M6.500 21.500 24.500 11v9a1.500 1.500 0 0 1-1.500 1.500z" fill="#35b0f0"/><rect x="0" y="5" width="12" height="12" rx="1.200" fill="#0f6cbd"/></svg>
<span class="t" style="left:725.06px;top:743.19px;font-size:11px;color:#fff;font-weight:700;">O</span>
<svg style="left:764.5px;top:737px;" width="25" height="23" viewBox="0 0 25 23"><circle cx="11.500" cy="3.500" r="3.300" fill="#7b83eb"/><circle cx="18.500" cy="4.800" r="2.300" fill="#5059c9"/><path d="M7 8h9.500v8.500a5 5 0 0 1-9.500 0z" fill="#7b83eb"/><path d="M15 8.500h7.500v6a3.700 3.700 0 0 1-7.500 0z" fill="#5059c9"/><rect x="0" y="5" width="11" height="11" rx="1.200" fill="#4b53bc"/></svg>
<span class="t" style="left:766.89px;top:743.61px;font-size:10.5px;color:#fff;font-weight:700;">T</span>
<svg style="left:774px;top:746px" width="16" height="16" viewBox="0 0 20 20"><defs><clipPath id="av3"><circle cx="10" cy="10" r="10"/></clipPath></defs><g clip-path="url(#av3)"><rect width="20" height="20" fill="#cdb6ae"/><rect x="0" y="0" width="6" height="20" fill="#b98f86"/><rect x="15" y="6" width="5" height="9" fill="#c0524a"/><ellipse cx="11" cy="17" rx="6.500" ry="7.500" fill="#7f8288"/><ellipse cx="10.500" cy="7" rx="3" ry="3.600" fill="#a97c66"/><path d="M7 6.500c0-3.500 7-3.800 7 0-.8-1.200-6.200-1.200-7 0z" fill="#2b2424"/><rect x="6" y="11" width="4" height="6" fill="#5e6066"/></g></svg>
<div style="left:760.0px;top:766px;width:32px;height:2px;background:#76b9ed;"></div>
<div style="left:803.5px;top:736px;width:24.5px;height:24px;background:#ff6c37;border-radius:50%"></div>
<svg style="left:808px;top:740px;" width="16" height="16" viewBox="0 0 16 16"><path d="M1 14.500 9.500 7l2 2z" fill="#fff"/><path d="M9 6l3-3 2.500 2.500-3 3z" fill="#fff" opacity=".9"/><circle cx="13.800" cy="2.800" r="1.600" fill="none" stroke="#fff" stroke-width=".9"/></svg>
<div style="left:844px;top:738px;width:22.5px;height:19px;background:#000;border:1px solid #8a8a8a;border-top:2.500px solid #c4c4c4"></div>
<span class="t" style="left:847.06px;top:742.34px;font-size:5.5px;color:#e6e6e6;font-weight:700;transform:scaleX(1.5266);">C:\_</span>
<div style="left:841.0px;top:766px;width:31px;height:2px;background:#76b9ed;"></div>
<svg style="left:884.5px;top:736.5px;" width="23" height="22.5" viewBox="0 0 23 22.5"><rect x="9" y="2.500" width="14" height="17.500" fill="#fff"/><path d="M14 6h7M14 8.500h7M14 11h7M14 13.500h7M14 16h7" stroke="#2b579a" stroke-width="1.100"/><path d="M0 2.300 13.500 0v22.500L0 20.200z" fill="#2b579a"/></svg>
<span class="t" style="left:887.80px;top:743.53px;font-size:10px;color:#fff;font-weight:700;transform:scaleX(0.8677);">W</span>
<div style="left:881.0px;top:766px;width:31px;height:2px;background:#76b9ed;"></div>
<svg style="left:924px;top:736.5px;" width="22.5" height="22" viewBox="0 0 22.5 22"><defs><linearGradient id="np" x1="0" y1="0" x2="1" y2="1"><stop offset="0" stop-color="#c9f0f5"/><stop offset=".5" stop-color="#6cc0d0"/><stop offset="1" stop-color="#2f8fa5"/></linearGradient></defs><path d="M19 3.500 22 4.500 21 20l-2.500 1z" fill="#d79b2a"/><path d="M8.500 1.500 20.500 3.500 18.500 21.500 0 16.500z" fill="url(#np)"/><path d="M8.500 .8 20.700 2.800 20.500 4 8.200 2z" fill="#e8e8e8"/><path d="M15 17 18.500 21.500 19.500 13z" fill="#eef6f8"/></svg>
<div style="left:921.0px;top:766px;width:31px;height:2px;background:#76b9ed;"></div>
<div style="left:983.5px;top:738px;width:20.5px;height:20px;background:linear-gradient(160deg,#ffd21a 0,#ffab10 45%,#f36a12 100%);border-radius:50%"></div>
<div style="left:994px;top:736px;width:12px;height:12px;background:#d42a1e;border-radius:50%"></div>
<span class="t" style="left:997.40px;top:737.53px;font-size:10px;color:#fff;font-weight:700;">1</span>
<span class="t" style="left:1013.95px;top:740.30px;font-size:15px;color:#fff;transform:scaleX(0.8662);">21°C</span>
<svg style="left:1069px;top:744.5px;" width="12.5" height="7" viewBox="0 0 12.5 7"><path d="M.6 6.500 6.200.8l5.600 5.700" fill="none" stroke="#fff" stroke-width="1.300"/></svg>
<svg style="left:1093.5px;top:740px;" width="11.5" height="16" viewBox="0 0 11.5 16"><rect x=".6" y="4" width="7.600" height="8" rx="1.600" fill="none" stroke="#fff" stroke-width="1.100"/><path d="M8.200 7.200 10.900 5.500v5L8.200 8.800" fill="none" stroke="#fff" stroke-width="1.100"/><path d="M1.500 1.800C3 .4 7 .4 8.500 1.800M1.500 14.200c1.500 1.400 5.500 1.400 7 0" fill="none" stroke="#fff" stroke-width="1.100"/></svg>
<svg style="left:1114.5px;top:741px;" width="17" height="14" viewBox="0 0 17 14"><path d="M4 11.500a3.200 3.200 0 0 1-.5-6.300A4.300 4.300 0 0 1 11.500 4 3.600 3.600 0 0 1 13.500 11.500z" fill="#8f8f8f"/><path d="M1 .5 15 13.500" stroke="#c9c9c9" stroke-width="1.100"/></svg>
<svg style="left:1138.5px;top:741.5px;" width="14.5" height="12.5" viewBox="0 0 14.5 12.5"><path d="M.6 4.200h2.500L6.400 .8v11L3.100 8.400H.6z" fill="none" stroke="#fff" stroke-width="1.100" stroke-linejoin="round"/><path d="M9 4l4.500 4.500M13.500 4 9 8.500" stroke="#fff" stroke-width="1.100"/></svg>
<svg style="left:1163px;top:741.5px;" width="16.5" height="12" viewBox="0 0 16.5 12"><rect x="4" y="3" width="11" height="7" fill="none" stroke="#fff" stroke-width="1.100"/><rect x="5.500" y="4.500" width="8" height="4" fill="#fff"/><path d="M15.500 5v3" stroke="#fff" stroke-width="1.200"/><path d="M1.500 0v2.500M3.500 0v2.500M.5 2.500h4v2a2 2 0 0 1-4 0zM2.500 6.500v3c0 1 .5 1.500 1.500 1.500" fill="none" stroke="#fff" stroke-width="1"/></svg>
<svg style="left:1189.5px;top:742.5px;" width="13.5" height="12.5" viewBox="0 0 13.5 12.5"><circle cx="11.500" cy="11" r="1.400" fill="#fff"/><path d="M7 11A4.500 4.500 0 0 1 11.500 6.500M3.800 11A7.700 7.700 0 0 1 11.500 3.300M.6 11A10.900 10.900 0 0 1 11.500 .1" fill="none" stroke="#fff" stroke-width="1.100"/></svg>
<span class="t" style="left:1213.27px;top:741.84px;font-size:12px;color:#fff;transform:scaleX(0.8647);">ENG</span>
<span class="t" style="left:1253.74px;top:732.84px;font-size:12px;color:#fff;transform:scaleX(0.9540);">11:37 AM</span>
<span class="t" style="left:1249.20px;top:750.84px;font-size:12px;color:#fff;transform:scaleX(0.9410);">02-12-2025</span>
<svg style="left:1325px;top:739.5px;" width="16" height="15" viewBox="0 0 16 15"><path d="M0 0h16v11.500H6.500L3 15v-3.500H0z" fill="#fff"/><path d="M3 3h10M3 5.500h10M3 8h10" stroke="#373c3c" stroke-width="1"/></svg>
<div style="left:1332.5px;top:747.5px;width:16px;height:16px;background:#373c3c;border-radius:50%;border:1px solid #a0a0a0"></div>
<span class="t" style="left:1337.15px;top:750.27px;font-size:11.5px;color:#fff;font-weight:700;">5</span>
<div style="left:1361.5px;top:728px;width:1px;height:40px;background:#7d7d7d;"></div>
</div>
</body></html>
